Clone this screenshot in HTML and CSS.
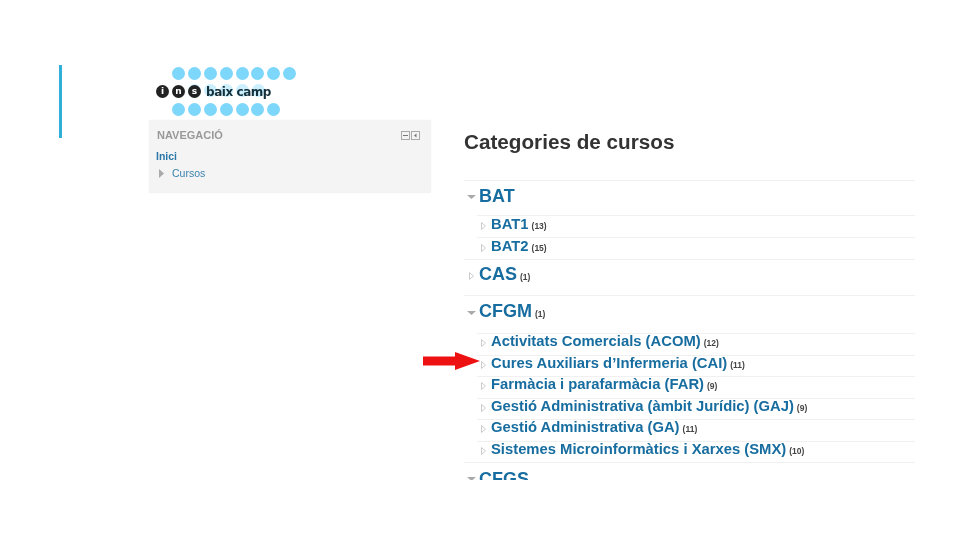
FILE: index.html
```html
<!DOCTYPE html>
<html lang="ca">
<head>
<meta charset="utf-8">
<title>Categories de cursos</title>
<link rel="stylesheet" href="styles.css">
</head>
<body>
<div class="slide">
  <div class="accent"></div>
  <div class="left">
    <div class="logo">
      <div class="dots"><i></i><i></i><i></i><i></i><i></i><i></i><i></i><i></i></div>
      <div class="logo-mid">
        <div class="dots faint"><i></i><i></i><i></i><i></i><i></i></div>
        <div class="badges"><b>i</b><b>n</b><b>s</b></div>
        <span class="logo-name">baix camp</span>
      </div>
      <div class="dots"><i></i><i></i><i></i><i></i><i></i><i></i><i></i></div>
    </div>
    <div class="panel">
      <div class="panel-head">
        <span class="panel-title">NAVEGACIÓ</span>
        <span class="panel-ctrls">
          <svg width="9" height="9" viewBox="0 0 9 9"><rect x=".5" y=".5" width="8" height="8" fill="#f4f4f4" stroke="#aaa"/><path d="M2 4.500h5" stroke="#777"/></svg>
          <svg width="9" height="9" viewBox="0 0 9 9"><rect x=".5" y=".5" width="8" height="8" fill="#f4f4f4" stroke="#aaa"/><path d="M5.500 2.500v4l-2.500-2z" fill="#777"/></svg>
        </span>
      </div>
      <a class="home">Inici</a>
      <div class="nav-item"><svg width="5" height="9" viewBox="0 0 5 9"><path d="M0 0l5 4.500-5 4.500z" fill="#aaa"/></svg><a>Cursos</a></div>
    </div>
  </div>
  <div class="right">
    <h1>Categories de cursos</h1>
    <div class="cat top first">
      <svg class="tw" viewBox="0 0 9 4"><path d="M0 0h9L4.500 4z" fill="#aaa"/></svg><a>BAT</a>
    </div>
    <div class="sub s1"><svg class="tr" viewBox="0 0 5 8"><path d="M.5.5l4 3.500-4 3.500z" fill="#fff" stroke="#ccc"/></svg><a>BAT1</a><small>(13)</small></div>
    <div class="sub s1"><svg class="tr" viewBox="0 0 5 8"><path d="M.5.5l4 3.500-4 3.500z" fill="#fff" stroke="#ccc"/></svg><a>BAT2</a><small>(15)</small></div>
    <div class="cat cas">
      <svg class="tr big" viewBox="0 0 5 8"><path d="M.5.5l4 3.500-4 3.500z" fill="#fff" stroke="#ccc"/></svg><a>CAS</a><small>(1)</small>
    </div>
    <div class="cat cfgm">
      <svg class="tw" viewBox="0 0 9 4"><path d="M0 0h9L4.500 4z" fill="#aaa"/></svg><a>CFGM</a><small>(1)</small>
    </div>
    <div class="sub s2"><svg class="tr" viewBox="0 0 5 8"><path d="M.5.5l4 3.500-4 3.500z" fill="#fff" stroke="#ccc"/></svg><a>Activitats Comercials (ACOM)</a><small>(12)</small></div>
    <div class="sub s2"><svg class="tr" viewBox="0 0 5 8"><path d="M.5.5l4 3.500-4 3.500z" fill="#fff" stroke="#ccc"/></svg><a>Cures Auxiliars d’Infermeria (CAI)</a><small>(11)</small></div>
    <div class="sub s2"><svg class="tr" viewBox="0 0 5 8"><path d="M.5.5l4 3.500-4 3.500z" fill="#fff" stroke="#ccc"/></svg><a>Farmàcia i parafarmàcia (FAR)</a><small>(9)</small></div>
    <div class="sub s2"><svg class="tr" viewBox="0 0 5 8"><path d="M.5.5l4 3.500-4 3.500z" fill="#fff" stroke="#ccc"/></svg><a>Gestió Administrativa (àmbit Jurídic) (GAJ)</a><small>(9)</small></div>
    <div class="sub s2"><svg class="tr" viewBox="0 0 5 8"><path d="M.5.5l4 3.500-4 3.500z" fill="#fff" stroke="#ccc"/></svg><a>Gestió Administrativa (GA)</a><small>(11)</small></div>
    <div class="sub s2"><svg class="tr" viewBox="0 0 5 8"><path d="M.5.5l4 3.500-4 3.500z" fill="#fff" stroke="#ccc"/></svg><a>Sistemes Microinformàtics i Xarxes (SMX)</a><small>(10)</small></div>
    <div class="cat top last">
      <svg class="tw" viewBox="0 0 9 4"><path d="M0 0h9L4.500 4z" fill="#aaa"/></svg><a>CFGS</a>
    </div>
  </div>
  <svg class="arrow" width="57" height="18" viewBox="0 0 57 18"><path d="M0 4.500h32V0l25 9-25 9v-4.500H0z" fill="#ee1111"/></svg>
</div>
</body>
</html>
```

FILE: styles.css
```css
html, body { margin: 0; padding: 0; background: #fff; }
body { font-family: "Liberation Sans", Arial, sans-serif; }
.slide {
  position: relative;
  width: 960px;
  height: 540px;
  box-sizing: border-box;
  padding: 65px 0 0 59px;
  display: flex;
  align-items: flex-start;
  overflow: hidden;
}
.accent { width: 3px; height: 73px; background: #32aedb; flex: none; }

.left { width: 282px; margin-left: 87px; flex: none; filter: blur(.35px); }
.logo { height: 55px; padding-left: 23px; display: flex; flex-direction: column; }
.dots { display: flex; gap: 2.900px; height: 13px; margin-top: 2px; }
.dots i { width: 13px; height: 13px; border-radius: 50%; background: #7dd7fb; flex: none; }
.logo-mid { height: 19px; margin: 2px 0 0 -16px; display: flex; align-items: center; position: relative; }
.dots.faint { position: absolute; left: 32px; top: 2px; margin: 0; opacity: .4; }
.badges { display: flex; gap: 3px; position: relative; }
.badges b {
  width: 13px; height: 13px; border-radius: 50%;
  background: #222; color: #fff;
  font-size: 9px; line-height: 13px; text-align: center;
  font-family: "DejaVu Sans", sans-serif;
}
.logo-name {
  position: relative; margin-left: 5px;
  font: bold 12px/1 "DejaVu Sans", sans-serif;
  letter-spacing: -.45px;
  color: #14303c;
}
.panel {
  background: #f4f4f4;
  height: 73px;
  box-sizing: border-box;
  padding: 9px 0 0 7px;
  border-radius: 0 3px 3px 0;
  box-shadow: 0 0 1px rgba(0,0,0,.15);
}
.panel-head { display: flex; align-items: center; justify-content: space-between; padding: 0 11px 0 1px; height: 12px; }
.panel-title { font-size: 11px; font-weight: bold; color: #999; }
.panel-ctrls { display: flex; gap: 1px; }
.panel-ctrls svg { display: block; }
.home { display: block; margin-top: 9px; font-size: 10.500px; line-height: 13px; font-weight: bold; color: #2a77a8; }
.nav-item { display: flex; align-items: center; margin: 4px 0 0 3px; font-size: 10.500px; line-height: 13px; color: #3a82ad; }
.nav-item a { margin-left: 8px; color: inherit; }

.right { width: 451px; height: 415px; margin-left: 33px; flex: none; overflow: hidden; filter: blur(.35px); }
h1 { margin: 65px 0 0; height: 50px; font-size: 20.700px; line-height: 24px; font-weight: bold; color: #333; }
a { color: #176d9f; }
small { font-size: 8.500px; font-weight: bold; color: #444; margin-left: 3px; }
.cat { display: flex; align-items: baseline; font-size: 18px; font-weight: bold; border-top: 1px solid #f0f0f0; box-sizing: border-box; padding-left: 3px; }
.cat a { margin-left: 3px; }
.cat.top { height: 35px; line-height: 30px; }
.cat.last { padding-top: 1px; }
.cat.cas { height: 36px; line-height: 28px; }
.cat.cfgm { height: 38px; line-height: 30px; }
.sub { display: flex; align-items: baseline; margin-left: 13px; padding-left: 3px; font-size: 14.800px; font-weight: bold; border-top: 1px solid #f0f0f0; box-sizing: border-box; }
.s1 { height: 22px; line-height: 16px; }
.s2 { height: 21.500px; line-height: 14px; }
.sub a { margin-left: 5px; }
.tw { width: 9px; height: 4px; align-self: center; flex: none; margin-bottom: 3px; }
.tr { width: 5px; height: 8px; margin-left: 1px; align-self: center; flex: none; margin-bottom: 2px; }
.tr.big { margin-left: 2px; margin-right: 2px; margin-bottom: 4px; }
.arrow { position: absolute; left: 423px; top: 352px; }
```
